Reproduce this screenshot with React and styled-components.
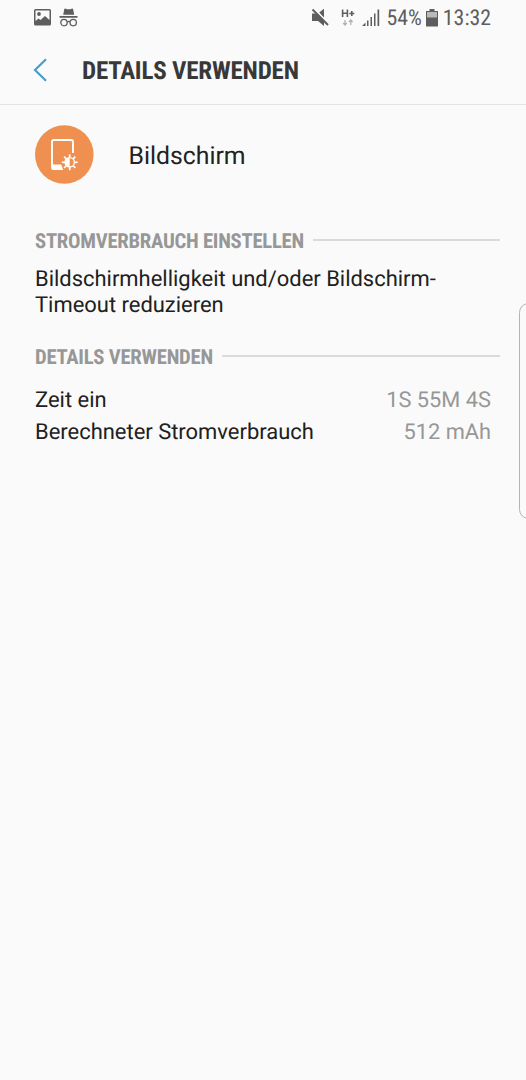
import React from "react";
import styled, { createGlobalStyle } from "styled-components";

const GlobalStyle = createGlobalStyle`
    * {
        box-sizing: border-box;
    }
    body {
        margin: 0;
        background: #fafafa;
        font-family: Roboto, "Liberation Sans", sans-serif;
        text-rendering: geometricPrecision;
    }
`;

const Screen = styled.div`
    position: relative;
    height: 1080px;
    overflow: hidden;
    background: #fafafa;
`;

const Condensed = styled.span`
    display: block;
    font-family: "Roboto Condensed", Roboto, sans-serif;
    font-stretch: 75%;
    white-space: nowrap;
`;

const StatusBar = styled.div`
    display: flex;
    justify-content: space-between;
    height: 35px;
    padding: 0 35px 0 33px;
    color: #5e5e5e;
    font-size: 21.8px;
    line-height: 25px;
`;

const StatusGroup = styled.div`
    display: flex;
    align-items: center;
    height: 35px;
`;

const StatusText = styled(Condensed)`
    margin-top: 2px;
`;

const StatusIcon = styled.svg`
    display: block;
    flex: none;
    margin-right: ${(props) => props.$gap || 0}px;
`;

const Header = styled.header`
    display: flex;
    align-items: center;
    height: 70px;
    padding: 0 33px;
    border-bottom: 1.5px solid #e3e3e3;
`;

const Title = styled.h1`
    margin: 5px 0 0 34px;
    color: #383838;
    font-size: 25px;
    font-weight: 700;
    letter-spacing: -0.2px;
    line-height: 30px;
`;

const Content = styled.main`
    padding: 20px 35px 0;
`;

const AppRow = styled.div`
    display: flex;
    align-items: center;
    gap: 33.5px;
    height: 60px;
    color: #222;
    font-size: 24.8px;
    line-height: 30px;
`;

const AppName = styled.span`
    margin-top: 3px;
`;

const SectionTitle = styled.h2`
    display: flex;
    align-items: center;
    gap: 9px;
    height: 26px;
    margin: ${(props) => props.$top}px -9px 0 0;
    color: #979797;
    font-size: 20.7px;
    font-weight: 700;
    letter-spacing: -0.26px;
    line-height: 24px;

    ${Condensed} {
        margin-top: 2px;
    }

    &::after {
        content: "";
        flex: 1;
        height: 1.5px;
        margin-top: -2px;
        background: #dadada;
    }
`;

const Hint = styled.p`
    margin: 13px 0 0;
    color: #202020;
    font-size: 21.95px;
    line-height: 26px;
`;

const Details = styled.dl`
    margin: 15px 0 0;
`;

const DetailRow = styled.div`
    display: flex;
    justify-content: space-between;
    font-size: 21.95px;
    line-height: 32px;
`;

const Label = styled.dt`
    color: #202020;
`;

const Value = styled.dd`
    margin: 0;
    color: #979797;
    font-size: 21.8px;
`;

const EdgeHandle = styled.div`
    position: absolute;
    top: 303px;
    right: -12px;
    width: 19px;
    height: 216px;
    border: 1px solid #b4b4b4;
    border-radius: 10px;
`;

const teeth = [0, 45, 90, 135, 180, 225, 270, 315];

const DisplayIcon = () => (
    <svg width="60" height="60" viewBox="0 0 60 60">
        <circle cx="29.3" cy="29.5" r="29.3" fill="#f09050" />
        <path
            d="M38 28V17a2 2 0 0 0-2-2H19a2 2 0 0 0-2 2v25a2 2 0 0 0 2 2H27"
            fill="none"
            stroke="#fff"
            strokeWidth="1.9"
        />
        <path d="M17 39.5h9.200l2 5.400H19a2 2 0 0 1-2-2z" fill="#fff" />
        <circle cx="34.700" cy="37.300" r="4.700" fill="none" stroke="#fff" strokeWidth="1.400" />
        <path d="M34.700 32.500a4.800 4.800 0 0 0 0 9.600z" fill="#fff" />
        {teeth.map((angle) => (
            <path
                key={angle}
                d="M34.7 29.400v3"
                stroke="#fff"
                strokeWidth="1.700"
                transform={`rotate(${angle} 34.7 37.3)`}
            />
        ))}
    </svg>
);

const details = [
    { label: "Zeit ein", value: "1S 55M 4S" },
    { label: "Berechneter Stromverbrauch", value: "512 mAh" },
];

const App = () => (
    <Screen>
        <GlobalStyle />
        <StatusBar>
            <StatusGroup>
                <StatusIcon width="19" height="18" viewBox="0 0 19 18" $gap={7}>
                    <path
                        fillRule="evenodd"
                        fill="#5e5e5e"
                        d="M2.5 0h14A1.500 1.500 0 0 1 18 1.500V15a1.500 1.500 0 0 1-1.500 1.500h-14A1.500 1.500 0 0 1 1 15V1.500A1.500 1.500 0 0 1 2.500 0zM2.500 1.500v10.500l3-2.500 2 1.500 4.500-4 4.500 4V1.500z"
                    />
                    <circle cx="6" cy="5" r="1.9" fill="#5e5e5e" />
                </StatusIcon>
                <StatusIcon width="20" height="20" viewBox="0 0 20 20">
                    <path
                        fill="#5e5e5e"
                        d="M5.2 1.5c.2-.8.8-1.2 1.5-.8 2 .7 4 .7 6 0 .8-.3 1.300 0 1.500.8l1 5.200H4.200zM.5 8h18v1.700H.5z"
                    />
                    <g fill="none" stroke="#5e5e5e" strokeWidth="1.3">
                        <circle cx="5" cy="14.6" r="3.2" />
                        <circle cx="14.2" cy="14.6" r="3.2" />
                        <path d="M8.2 14q1.4-1.200 2.800 0" />
                    </g>
                </StatusIcon>
            </StatusGroup>
            <StatusGroup>
                <StatusIcon width="20" height="20" viewBox="0 0 20 20" $gap={10}>
                    <path fill="#5e5e5e" d="M1 5.500h6L13 11v7l-6-5H1zM8.200 4.600 13 .8v9z" />
                    <path d="M3 .9 18.500 16.400" stroke="#fafafa" strokeWidth="1.500" />
                    <path d="M1.500 1.500 17 17" stroke="#5e5e5e" strokeWidth="2" />
                </StatusIcon>
                <StatusIcon width="15" height="20" viewBox="0 0 15 20" $gap={6}>
                    <path
                        fill="none"
                        stroke="#5e5e5e"
                        strokeWidth="1.6"
                        d="M1.600 1.500v7.500M6.400 1.500v7.500M1.600 5.300h5M8.300 5.500h5M10.800 3v5"
                    />
                    <path
                        fill="none"
                        stroke="#b0b0b0"
                        strokeWidth="1.3"
                        d="M4 12v5M2.200 15l1.800 2 1.800-2M9.800 17v-5M8 14l1.800-2 1.800 2"
                    />
                </StatusIcon>
                <StatusIcon width="18" height="18" viewBox="0 0 18 18" $gap={7}>
                    <path
                        fill="#5e5e5e"
                        d="M0 17l3.500-3.500v3.500zM5 11.500h1.500v5.500H5zM8.500 8h1.500v9H8.500zM12 4.500h1.500v12.500H12zM15.500.5h1.700V17h-1.700z"
                    />
                </StatusIcon>
                <StatusText>54%</StatusText>
                <StatusIcon width="21" height="18" viewBox="0 0 21 18">
                    <path fill="#5e5e5e" d="M7.500 0h5v2h3.500v15.500H4V2h3.500z" />
                    <path fill="#b9b9b9" d="M5 3h10v5.500H5z" />
                </StatusIcon>
                <StatusText>13:32</StatusText>
            </StatusGroup>
        </StatusBar>
        <Header>
            <svg width="15" height="24" viewBox="0 0 15 24">
                <path d="M13 1.200 2 12l11 10.800" fill="none" stroke="#46a0c6" strokeWidth="2.2" />
            </svg>
            <Title>
                <Condensed>DETAILS VERWENDEN</Condensed>
            </Title>
        </Header>
        <Content>
            <AppRow>
                <DisplayIcon />
                <AppName>Bildschirm</AppName>
            </AppRow>
            <SectionTitle $top={43}>
                <Condensed>STROMVERBRAUCH EINSTELLEN</Condensed>
            </SectionTitle>
            <Hint>
                Bildschirmhelligkeit und/oder Bildschirm-
                <br />
                Timeout reduzieren
            </Hint>
            <SectionTitle $top={25}>
                <Condensed>DETAILS VERWENDEN</Condensed>
            </SectionTitle>
            <Details>
                {details.map(({ label, value }) => (
                    <DetailRow key={label}>
                        <Label>{label}</Label>
                        <Value>{value}</Value>
                    </DetailRow>
                ))}
            </Details>
        </Content>
        <EdgeHandle />
    </Screen>
);

export default App;
